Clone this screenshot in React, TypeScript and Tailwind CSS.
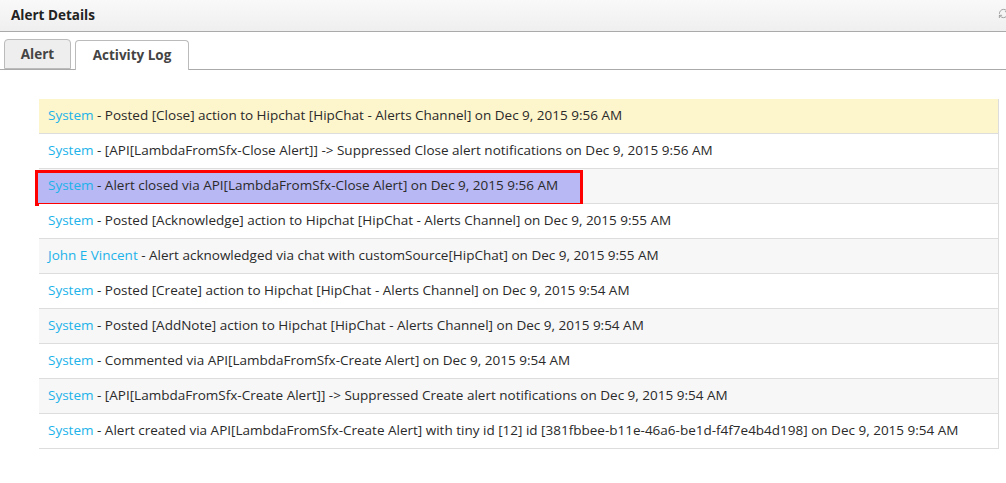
import { RefreshCw } from "lucide-react";

type Entry = { who: string; text: string };

const entries: Entry[] = [
  { who: "System", text: "Posted [Close] action to Hipchat [HipChat - Alerts Channel] on Dec 9, 2015 9:56 AM" },
  { who: "System", text: "[API[LambdaFromSfx-Close Alert]] -> Suppressed Close alert notifications on Dec 9, 2015 9:56 AM" },
  { who: "System", text: "Alert closed via API[LambdaFromSfx-Close Alert] on Dec 9, 2015 9:56 AM" },
  { who: "System", text: "Posted [Acknowledge] action to Hipchat [HipChat - Alerts Channel] on Dec 9, 2015 9:55 AM" },
  { who: "John E Vincent", text: "Alert acknowledged via chat with customSource[HipChat] on Dec 9, 2015 9:55 AM" },
  { who: "System", text: "Posted [Create] action to Hipchat [HipChat - Alerts Channel] on Dec 9, 2015 9:54 AM" },
  { who: "System", text: "Posted [AddNote] action to Hipchat [HipChat - Alerts Channel] on Dec 9, 2015 9:54 AM" },
  { who: "System", text: "Commented via API[LambdaFromSfx-Create Alert] on Dec 9, 2015 9:54 AM" },
  { who: "System", text: "[API[LambdaFromSfx-Create Alert]] -> Suppressed Create alert notifications on Dec 9, 2015 9:54 AM" },
  { who: "System", text: "Alert created via API[LambdaFromSfx-Create Alert] with tiny id [12] id [381fbbee-b11e-46a6-be1d-f4f7e4b4d198] on Dec 9, 2015 9:54 AM" },
];

const App = () => {
  return (
    <div className="w-[1006px] h-[483px] bg-white overflow-hidden font-['Open_Sans',sans-serif] text-[#333]">
      {/* header */}
      <div className="h-[32px] flex items-center justify-between pl-[11px] bg-gradient-to-b from-[#f9f9f9] to-[#efefef] border-b border-[#aaa]">
        <span className="text-[13.5px] font-bold text-[#222]">Alert Details</span>
        <RefreshCw className="w-[11px] h-[11px] text-[#999] translate-x-[3px] -translate-y-[2px]" strokeWidth={2} />
      </div>

      {/* tabs */}
      <div className="mt-[8px] flex items-end gap-[4px] pl-[4px] border-b border-[#aaa] h-[30px]">
        <div className="h-[30px] w-[67px] flex items-center justify-center bg-[#eeeeee] border border-[#bbb] rounded-t-[4px] text-[13.5px] font-bold text-[#444]">
          Alert
        </div>
        <div className="h-[30px] w-[114px] -mb-px flex items-center justify-center bg-white border border-b-0 border-[#bbb] rounded-t-[4px] text-[13.5px] font-bold text-[#444]">
          Activity Log
        </div>
      </div>

      {/* activity log */}
      <div className="mt-[29px] ml-[39px] mr-[7px] border-r border-[#ddd]">
        {entries.map((e, i) => {
          const bg = i === 0 ? "bg-[#fdf5cb]" : i % 2 === 1 ? "bg-white" : "bg-[#f7f7f7]";
          return (
            <div key={i} className={`relative h-[35px] flex items-center pl-[9px] pb-[2px] border-b border-[#ddd] text-[13.5px] text-[#2a2a2a] whitespace-nowrap ${bg}`}>
              {i === 2 && (
                <div className="absolute left-[-4px] top-[1px] w-[548px] h-[36px] border-[3px] border-[#f00] bg-[#b8b8f4]" />
              )}
              <span className="relative">
                <span className="text-[#1cb3ea]">{e.who}</span>
                <span> - {e.text}</span>
              </span>
            </div>
          );
        })}
      </div>
    </div>
  );
};

export default App;
